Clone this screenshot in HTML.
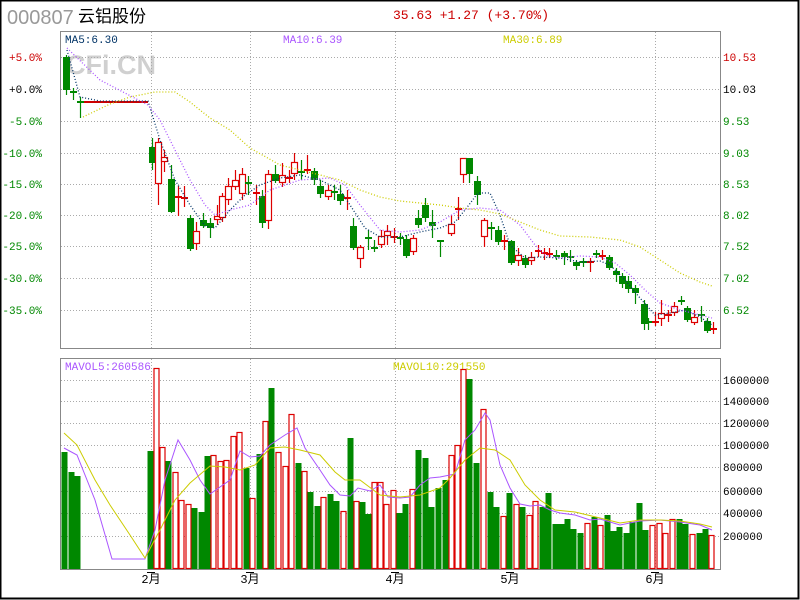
<!DOCTYPE html>
<html><head><meta charset="utf-8">
<style>
html,body{margin:0;padding:0;background:#fff;}
svg{display:block;}
text{font-family:"Liberation Mono","Noto Sans CJK SC",monospace;}
</style></head><body>
<svg id="s" width="800" height="600" xmlns="http://www.w3.org/2000/svg">
<rect x="0.5" y="0.5" width="798" height="598" fill="#fff" stroke="#000" stroke-width="2"/>
<text x="7" y="24" font-size="20" fill="#999" style="font-family:'Liberation Sans',sans-serif">000807</text>
<text x="78" y="22" font-size="17" fill="#000" style="font-family:'Liberation Sans','Noto Sans CJK SC',sans-serif">云铝股份</text>
<text x="393" y="19" font-size="13" fill="#c00">35.63 +1.27 (+3.70%)</text>
<text x="66" y="74" font-size="27" font-weight="bold" fill="#d0d0d0" style="font-family:'Liberation Sans',sans-serif">CFi.CN</text>
<g id="grid" stroke="#aaa" stroke-dasharray="1,2" stroke-width="1"></g>
<rect x="60.5" y="31.5" width="660" height="317" fill="none" stroke="#888"/>
<rect x="60.5" y="358.5" width="660" height="211" fill="none" stroke="#888"/>
<text x="65" y="43" font-size="11" fill="#036">MA5:6.30</text>
<text x="283" y="43" font-size="11" fill="#a5f">MA10:6.39</text>
<text x="503" y="43" font-size="11" fill="#cc0">MA30:6.89</text>
<text x="65" y="370" font-size="11" fill="#a5f">MAVOL5:260586</text>
<text x="393" y="370" font-size="11" fill="#cc0">MAVOL10:291550</text>
<g id="lab" font-size="11"></g>
<g id="vol"></g>
<g id="cand"></g>
<g id="lines" fill="none"></g>
</svg>
<script>
var NS="http://www.w3.org/2000/svg";
function el(p,t,a,txt){var e=document.createElementNS(NS,t);for(var k in a)e.setAttribute(k,a[k]);if(txt!=null)e.textContent=txt;document.getElementById(p).appendChild(e);return e;}
[57,89,121,153,184,215,246,278,310].forEach(function(y){el('grid','line',{x1:61,x2:720,y1:y+.5,y2:y+.5});});
[380,401,423,445,467,491,513,536].forEach(function(y){el('grid','line',{x1:61,x2:720,y1:y+.5,y2:y+.5});});
[151,250,395,655].forEach(function(x){el('grid','line',{x1:x+.5,x2:x+.5,y1:32,y2:348});el('grid','line',{x1:x+.5,x2:x+.5,y1:359,y2:569});});
var L=[["+5.0%",57,"#c00"],["+0.0%",89,"#000"],["-5.0%",121,"#080"],["-10.0%",153,"#080"],["-15.0%",184,"#080"],["-20.0%",215,"#080"],["-25.0%",246,"#080"],["-30.0%",278,"#080"],["-35.0%",310,"#080"]];
L.forEach(function(l){el('lab','text',{x:42,y:l[1]+4,fill:l[2],'text-anchor':'end'},l[0]);});
var R=[["10.53",57,"#c00"],["10.03",89,"#000"],["9.53",121,"#080"],["9.03",153,"#080"],["8.53",184,"#080"],["8.02",215,"#080"],["7.52",246,"#080"],["7.02",278,"#080"],["6.52",310,"#080"]];
R.forEach(function(l){el('lab','text',{x:723,y:l[1]+4,fill:l[2]},l[0]);});
var V=[["1600000",380],["1400000",401],["1200000",423],["1000000",445],["800000",467],["600000",491],["400000",513],["200000",536]];
V.forEach(function(l){el('lab','text',{x:723,y:l[1]+4,fill:"#000"},l[0]);});
[["2月",151],["3月",250],["4月",395],["5月",510],["6月",655]].forEach(function(m){el('lab','text',{x:m[1],y:583,'text-anchor':'middle',fill:'#000','font-size':12},m[0]);el('lab','line',{x1:m[1]-4,x2:m[1]+4,y1:572.5,y2:572.5,stroke:'#000'});});
var C=[[66,57,90,'g',55,95],[73,91,93,'g',88,100],[80,101,103,'g',97,118],
[152,147,163,'g',138,170],[158,142,184,'r',138,205],[164,157,162,'r',150,172],[171,179,212,'g',165,213],[178,196,198,'r',186,216],[184,197,199,'r',186,207],
[190,218,249,'g',215,251],[196,231,244,'r',222,250],[203,220,226,'g',213,228],[210,223,228,'g',218,238],[217,216,220,'r',205,225],[222,196,218,'r',193,222],
[228,186,200,'r',178,205],[235,180,187,'r',170,190],[242,174,194,'r',168,200],[248,182,185,'g',176,195],[256,192,194,'r',185,205],[262,196,223,'g',190,228],
[268,174,221,'r',170,229],[275,174,181,'g',165,183],[282,175,183,'r',163,187],[289,177,179,'r',170,183],[294,162,174,'r',153,180],[301,171,172,'g',160,180],
[307,169,171,'r',155,174],[314,171,180,'g',168,185],[320,186,194,'g',180,198],[328,190,197,'r',185,200],[334,191,193,'g',185,200],[340,194,201,'g',185,205],
[347,197,199,'r',190,210],[353,226,248,'g',218,250],[360,247,259,'r',245,268],[368,237,239,'g',230,250],[374,247,250,'g',240,252],[381,236,245,'r',230,248],
[387,231,236,'r',225,245],[394,236,238,'r',228,243],[400,237,239,'g',233,245],[406,239,256,'g',235,258],[413,238,252,'r',235,255],[418,218,225,'g',210,228],
[425,205,218,'g',198,222],[432,222,226,'g',210,238],[440,240,242,'g',240,257],[451,224,234,'r',215,236],[458,208,210,'r',197,220],[463,158,175,'r',158,183],
[469,158,174,'g',158,183],[477,181,195,'g',176,205],[484,220,237,'r',218,247],[491,227,229,'g',222,240],[498,230,242,'g',226,245],[504,240,242,'r',235,250],
[511,241,263,'g',240,265],[518,255,261,'r',248,266],[525,258,265,'g',255,268],[531,257,261,'r',252,265],[538,250,253,'r',245,257],[544,252,254,'r',248,260],
[549,253,255,'r',248,258],[556,255,257,'g',250,260],[564,253,257,'g',251,265],[570,256,259,'g',250,262],[576,262,266,'g',260,270],[583,261,263,'g',258,267],
[590,261,264,'r',258,272],[596,253,255,'g',250,258],[602,255,257,'r',250,260],[609,257,268,'g',255,270],[616,271,275,'g',268,282],[622,276,284,'g',273,288],
[628,281,289,'g',276,293],[635,288,293,'g',285,304],[644,304,324,'g',300,330],[648,321,323,'g',318,330],[655,321,324,'r',312,326],[661,313,319,'r',300,326],
[668,314,316,'r',310,322],[674,306,313,'r',302,316],[681,300,303,'g',296,305],[687,308,320,'g',306,322],[694,317,323,'r',310,325],[701,314,316,'g',306,322],
[707,321,331,'g',318,333],[713,328,330,'r',322,334]];
el('cand','line',{x1:83,x2:148,y1:102,y2:102,stroke:'#c00','stroke-width':2});
C.forEach(function(c){var col=c[3]=='r'?'#d00':'#080';var x=c[0];
el('cand','line',{x1:x+.5,x2:x+.5,y1:c[4],y2:c[5],stroke:col,'stroke-width':1.2});
var h=c[2]-c[1];
if(h<=3){el('cand','rect',{x:x-3,y:c[1],width:7,height:2,fill:col});}
else if(c[3]=='r'){el('cand','rect',{x:x-2.5,y:c[1]+.5,width:6,height:h-1,fill:'#fff',stroke:col,'stroke-width':1.2});}
else{el('cand','rect',{x:x-3,y:c[1],width:7,height:h,fill:col});}});
var B=[[64,452,'g'],[71,472,'g'],[77,476,'g'],[150,451,'g'],[156,368,'r'],[162,447,'r'],[168,461,'g'],[175,472,'r'],[181,500,'r'],[188,504,'r'],[194,508,'g'],[201,512,'g'],
[207,456,'g'],[213,455,'r'],[220,461,'r'],[226,460,'r'],[233,436,'r'],[239,432,'r'],[246,468,'g'],[252,498,'r'],[259,454,'g'],[265,421,'r'],[271,388,'g'],[278,452,'r'],
[285,466,'r'],[291,414,'r'],[298,463,'g'],[304,471,'r'],[310,492,'g'],[317,506,'g'],[323,497,'r'],[330,494,'g'],[336,501,'g'],[343,511,'r'],[350,438,'g'],[356,501,'r'],
[362,502,'g'],[368,514,'g'],[374,482,'r'],[380,482,'r'],[386,504,'r'],[393,490,'r'],[399,513,'g'],[405,504,'g'],[412,489,'r'],[418,450,'g'],[425,458,'g'],[431,507,'g'],
[438,488,'g'],[445,480,'g'],[451,455,'r'],[457,445,'r'],[463,369,'r'],[469,379,'g'],[476,463,'g'],[483,409,'r'],[490,492,'g'],[496,507,'g'],[503,516,'r'],[509,493,'g'],
[516,504,'r'],[522,507,'g'],[529,515,'r'],[535,501,'r'],[542,507,'g'],[548,493,'g'],[555,524,'g'],[561,524,'g'],[567,519,'g'],[573,529,'g'],[580,533,'g'],[587,523,'r'],
[594,517,'g'],[600,525,'r'],[607,515,'g'],[613,531,'g'],[619,527,'g'],[626,533,'g'],[632,522,'g'],[639,503,'g'],[645,530,'g'],[652,525,'r'],[659,523,'r'],[665,533,'r'],
[672,519,'r'],[679,519,'g'],[685,524,'g'],[692,534,'r'],[699,533,'g'],[705,529,'g'],[711,535,'r']];
B.forEach(function(b){var x=b[0]-2.5;if(b[2]=='g')el('vol','rect',{x:x,y:b[1],width:6,height:569-b[1],fill:'#080'});
else el('vol','rect',{x:x+.5,y:b[1]+.5,width:5,height:568-b[1],fill:'#fff',stroke:'#d00','stroke-width':1.2});});
function pl(pts,col,dash,w){el('lines','polyline',{points:pts,stroke:col,'stroke-width':w||1,'stroke-dasharray':dash||'none'});}
pl("67,50 80,97 100,101 148,101 160,140 175,180 190,205 205,226 215,228 230,210 245,195 260,185 280,178 300,175 320,180 340,190 350,205 365,228 380,237 400,237 420,232 440,228 455,222 465,210 478,193 490,193 500,215 510,245 525,258 540,257 560,258 580,262 600,261 610,265 625,280 640,298 655,315 670,313 685,310 700,317 712,325","#036","1,2",1.3);
pl("67,48 100,80 148,105 160,120 175,150 190,180 205,205 215,215 230,210 250,205 270,190 300,180 330,178 345,185 360,205 380,230 400,232 420,230 440,222 460,210 480,208 500,210 520,225 535,245 545,255 560,258 580,256 600,257 615,263 630,275 645,290 660,303 680,310 700,315 712,318","#a5f","1,2",1.3);
pl("83,117 110,104 130,97 155,92 175,92 190,102 210,118 230,130 250,148 280,165 300,170 320,175 340,180 360,190 380,197 400,201 420,203 440,205 460,208 480,210 500,214 520,222 540,230 560,236 590,237 620,240 640,247 660,260 680,273 700,282 712,286","#cc0","1,2",1.3);
pl("64,448 77,455 95,500 112,559 145,559 155,530 165,480 178,440 190,460 200,480 210,494 220,487 230,480 240,451 250,457 260,456 270,445 285,435 297,428 305,448 320,470 330,485 340,495 350,496 358,488 370,491 380,485 388,497 400,498 410,497 420,485 430,478 440,477 455,474 465,440 475,430 485,413 490,420 500,465 510,488 520,504 530,506 540,505 550,510 560,513 575,515 590,520 600,519 620,525 640,521 660,520 680,522 700,525 712,530","#a5f");
pl("64,433 77,445 95,480 110,505 130,535 145,558 160,530 175,500 190,483 210,466 225,467 240,470 255,465 270,448 285,447 300,450 320,455 335,472 345,480 360,480 380,495 400,497 420,495 440,488 450,478 465,460 480,448 495,450 510,460 525,485 540,500 555,510 575,512 600,518 620,523 640,520 660,520 680,521 700,524 712,527","#cc0");
</script>
</body></html>
